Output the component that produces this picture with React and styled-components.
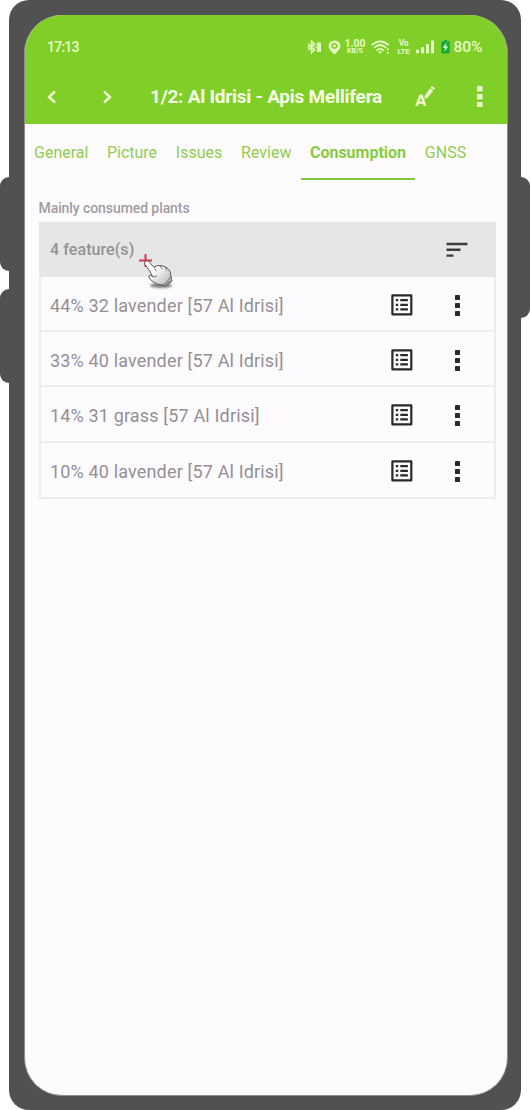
import React from "react";
import styled, { createGlobalStyle } from "styled-components";

const GlobalStyle = createGlobalStyle`
  *, *::before, *::after { box-sizing: border-box; }
  body { margin: 0; background: #fff; font-family: Roboto, "Liberation Sans", sans-serif; }
  svg { display: block; flex: none; }
`;

const Stage = styled.main`
  position: relative;
  width: 530px;
  height: 1110px;
  padding: 0 9px;
  overflow: hidden;
`;

const SideButton = styled.div`
  position: absolute;
  top: ${(p) => p.$top}px;
  ${(p) => p.$side}: 0;
  width: 20px;
  height: ${(p) => p.$height}px;
  border-radius: 9px;
  background: #515151;
`;

const Phone = styled.div`
  position: relative;
  height: 1110px;
  padding: 15px 13px 14px 15px;
  border-radius: 20px;
  background: #515151;
`;

const Screen = styled.div`
  height: 100%;
  border: solid #8c8c8c;
  border-width: 0 1px 1px;
  border-radius: 38px;
  overflow: hidden;
  background: #fefbff;
`;

const Header = styled.header`
  height: 109px;
  background: #80ce28;
  color: #f4ffe2;
`;

const StatusBar = styled.div`
  display: flex;
  align-items: center;
  height: 54px;
  padding: 10px 24.5px 0 22px;
`;

const Clock = styled.span`
  flex: 1;
  font-size: 14px;
  font-weight: 500;
  letter-spacing: -0.75px;
  color: #e9fbc8;
`;

const StatusIcons = styled.div`
  display: flex;
  align-items: center;
  color: #e6fac6;
`;

const Slot = styled.div`
  width: ${(p) => p.$w}px;
  display: flex;
  align-items: center;
`;

const Tiny = styled.div`
  display: flex;
  flex-direction: column;
  align-items: center;
  font-weight: 700;
  letter-spacing: ${(p) => p.$track || 0}px;
  font-size: ${(p) => p.$top}px;
  line-height: 9.5px;
  small {
    font-size: ${(p) => p.$bottom}px;
    line-height: 7.5px;
  }
`;

const Battery = styled.span`
  font-size: 15.5px;
  font-weight: 500;
`;

const TitleBar = styled.div`
  display: flex;
  align-items: center;
  height: 55px;
  padding: 0 24.5px 0 20px;
`;

const Title = styled.h1`
  flex: 1;
  margin: 0;
  font-size: 19px;
  font-weight: 700;
  letter-spacing: -0.25px;
  white-space: nowrap;
  color: #f6ffe6;
`;

const Tabs = styled.nav`
  display: flex;
  height: 56px;
`;

const Tab = styled.div`
  width: ${(p) => p.$w}px;
  height: 56px;
  display: flex;
  justify-content: center;
  padding-top: 19px;
  border-bottom: 2px solid ${(p) => (p.$active ? "#80c93a" : "transparent")};
  font-size: 16px;
  line-height: 20px;
  font-weight: ${(p) => (p.$active ? 700 : 400)};
  color: ${(p) => (p.$active ? "#87cb40" : "#8fcd4e")};
  white-space: nowrap;
`;

const Section = styled.section`
  padding: 19px 11px 0 13.5px;
`;

const Caption = styled.h2`
  margin: 0;
  height: 23px;
  font-size: 14px;
  line-height: 18px;
  font-weight: 500;
  letter-spacing: -0.08px;
  color: #a09da1;
`;

const Table = styled.div`
  border: 2px solid #efecf0;
  border-top: 0;
`;

const Row = styled.div`
  display: flex;
  align-items: center;
  height: ${(p) => (p.$last ? 54 : 55.2)}px;
  padding: 3px 34px 0 9.5px;
  border-bottom: ${(p) => (p.$last ? 0 : 2)}px solid #efecf0;
  color: #2b292c;
`;

const HeadRow = styled(Row)`
  height: 55px;
  margin: 0 -2px;
  padding: 0 28px 0 11.5px;
  border: 0;
  background: #e6e6e6;
`;

const RowText = styled.span`
  flex: 1;
  font-size: 18px;
  letter-spacing: 0.16px;
  color: #939094;
`;

const Count = styled.span`
  flex: 1;
  font-size: 16px;
  font-weight: 500;
  letter-spacing: 0.08px;
  color: #939393;
`;

const Pointer = styled.svg`
  position: absolute;
  left: 136px;
  top: 251px;
`;

const Chevron = ({ right }) => (
  <svg width="14" height="16" viewBox="0 0 14 16" fill="none" stroke="#efffcf" strokeWidth="2.4">
    <path d={right ? "M4 2.500 10 8 4 13.500" : "M10 2.500 4 8 10 13.500"} />
  </svg>
);

const Dots = ({ size = 5, gap = 8, color = "#2b292c" }) => (
  <svg width={size} height={gap * 2 + size} fill={color}>
    {[0, 1, 2].map((i) => (
      <rect key={i} width={size} height={size} y={i * gap} rx="0.4" />
    ))}
  </svg>
);

const ListIcon = () => (
  <svg width="22" height="22" viewBox="0 0 22 22" fill="#2b292c">
    <path fillRule="evenodd" d="M1.5.3h18.7q1.2 0 1.2 1.2v18.7q0 1.2-1.2 1.2H1.5Q.3 21.4.3 20.2V1.5Q.3.3 1.5.3ZM2.5 2.5v16.7h16.7V2.5Z" />
    <path d="M4.8 5h2.4v2.3H4.8zM9.3 5h7.6v2.3H9.3zM4.8 9.7h2.4V12H4.8zM9.3 9.7h7.6V12H9.3zM4.8 14.3h2.4v2.3H4.8zM9.3 14.3h7.6v2.3H9.3z" />
  </svg>
);

const SortIcon = () => (
  <svg width="22" height="16" viewBox="0 0 22 16" fill="#3c3c3c">
    <path d="M.5.8h21v2.400H.5zM.5 6.600h14V9H.5zM.5 12.400h7v2.400h-7z" />
  </svg>
);

const BluetoothIcon = () => (
  <svg width="15" height="14" viewBox="0 0 15 14">
    <path d="M1 4 7.500 9.700 4.500 12.700V1.300L7.500 4.300 1 10" fill="none" stroke="currentColor" strokeWidth="1.600" />
    <path d="M.5 7h1.500M7.600 7h1.200" stroke="currentColor" strokeWidth="1.500" />
    <rect x="9.800" y="2.600" width="4.200" height="9.400" rx=".6" fill="currentColor" />
  </svg>
);

const PinIcon = () => (
  <svg width="13" height="15" viewBox="0 0 12 15" preserveAspectRatio="none" fill="currentColor">
    <path fillRule="evenodd" d="M6 .4a5.500 5.500 0 0 1 5.500 5.500c0 3-3 5.600-5.500 8.700C3.500 11.500.5 8.900.5 5.900A5.500 5.500 0 0 1 6 .4Zm0 2.700a2.800 2.800 0 1 0 0 5.600 2.800 2.800 0 0 0 0-5.600Z" />
    <circle cx="6" cy="5.900" r="1.400" />
  </svg>
);

const WifiIcon = () => (
  <svg width="20" height="15" viewBox="0 0 20 15" fill="none" stroke="currentColor" strokeWidth="1.700">
    <path d="M.7 5.200Q9.200-2.600 17.700 5.200M3 8Q9.200 2 15.400 8M5.600 10.600Q9.200 7.200 12.800 10.600" />
    <path d="m7.200 11.800 2 2.200 2-2.200q-2-1.500-4 0Z" fill="currentColor" stroke="none" />
    <path d="M16.800 8.300v2M16.800 11.700v2" />
  </svg>
);

const SignalIcon = () => (
  <svg width="18" height="14" viewBox="0 0 18 14" fill="currentColor">
    <path d="M0 9.800h3v3.500H0zM5 7.200h3v6.100H5zM10 4h3v9.300h-3zM15 .5h3v12.800h-3z" />
  </svg>
);

const BatteryIcon = () => (
  <svg width="9" height="14" viewBox="0 0 9 14">
    <path d="M3 0h3v1.200h1.500q1.200 0 1.200 1.200v9.800q0 1.200-1.200 1.200h-6Q.3 13.400.3 12.200V2.400q0-1.200 1.200-1.200H3Z" fill="#1ca83b" />
    <path d="M5.600 2.800 1.700 7.800h2.400l-.7 3.800 3.900-5.200H4.900Z" fill="#dcffe0" />
  </svg>
);

const EditTextIcon = () => (
  <svg width="20" height="21" viewBox="0 0 20 21" fill="#f0ffd0">
    <path fillRule="evenodd" d="M4.500 8.500h3L11.500 20H8.800L8 17.700H3.700L2.800 20H.2Zm1.400 3.100L4.500 15.600h2.900Z" />
    <path d="M9.600 13.300 9.800 9.700 15 2.300 18.200 4.700 12.600 11.600ZM15.600 1.500 16.900 0 20 2.300 18.800 4Z" />
  </svg>
);

const rows = [
  "44% 32 lavender [57 Al Idrisi]",
  "33% 40 lavender [57 Al Idrisi]",
  "14% 31 grass [57 Al Idrisi]",
  "10% 40 lavender [57 Al Idrisi]",
];

export default function App() {
  return (
    <Stage>
      <GlobalStyle />
      <SideButton $side="left" $top={177} $height={93.5} />
      <SideButton $side="left" $top={289} $height={93.5} />
      <SideButton $side="right" $top={177} $height={140.5} />
      <Phone>
        <Screen>
          <Header>
            <StatusBar>
              <Clock>17:13</Clock>
              <StatusIcons>
                <Slot $w={21}><BluetoothIcon /></Slot>
                <Slot $w={16}><PinIcon /></Slot>
                <Slot $w={27}>
                  <Tiny $top={10.5} $bottom={7}>1.00<small>KB/S</small></Tiny>
                </Slot>
                <Slot $w={26}><WifiIcon /></Slot>
                <Slot $w={19}>
                  <Tiny $top={8.5} $bottom={8} $track={-0.3}>Vo<small>LTE</small></Tiny>
                </Slot>
                <Slot $w={25}><SignalIcon /></Slot>
                <Slot $w={12}><BatteryIcon /></Slot>
                <Battery>80%</Battery>
              </StatusIcons>
            </StatusBar>
            <TitleBar>
              <Slot $w={55}><Chevron /></Slot>
              <Slot $w={50}><Chevron right /></Slot>
              <Title>1/2: Al Idrisi - Apis Mellifera</Title>
              <Slot $w={62}><EditTextIcon /></Slot>
              <Dots size={5.5} gap={8} color="#f1ffd9" />
            </TitleBar>
          </Header>
          <Tabs>
            <Tab $w={72.5}>General</Tab>
            <Tab $w={69}>Picture</Tab>
            <Tab $w={65}>Issues</Tab>
            <Tab $w={69.5}>Review</Tab>
            <Tab $w={114} $active>Consumption</Tab>
            <Tab $w={61}>GNSS</Tab>
          </Tabs>
          <Section>
            <Caption>Mainly consumed plants</Caption>
            <Table>
              <HeadRow>
                <Count>4 feature(s)</Count>
                <SortIcon />
              </HeadRow>
              {rows.map((text, i) => (
                <Row key={i} $last={i === rows.length - 1}>
                  <RowText>{text}</RowText>
                  <Slot $w={64}><ListIcon /></Slot>
                  <Dots />
                </Row>
              ))}
            </Table>
          </Section>
        </Screen>
      </Phone>
      <Pointer width="42" height="42" viewBox="0 0 42 42">
        <defs>
          <linearGradient id="hand" x1="0" y1="0" x2="1" y2="1">
            <stop offset=".35" stopColor="#fff" />
            <stop offset="1" stopColor="#aaa" />
          </linearGradient>
          <filter id="soft" x="-30%" y="-100%" width="160%" height="300%">
            <feGaussianBlur stdDeviation="1.200" />
          </filter>
        </defs>
        <ellipse cx="25" cy="34.500" rx="11" ry="2.500" fill="#000" opacity=".5" filter="url(#soft)" />
        <path d="M9.500 3v13M3 9.500h13" stroke="#d8344c" strokeWidth="2" />
        <path d="M9.500 10.200Q11.500 8.700 13.500 11.500L18 16.300Q21 13.900 24 14.600Q28 14.400 31 17Q35 19.500 34.700 24.500L36 30 29.500 35.500 26 34Q20 33.800 16.500 30.200 11.500 26.500 13.300 24.700 14.500 24 16.700 25.600L13.800 20.200 9 13.500Q8 11.500 9.500 10.200Z" fill="url(#hand)" stroke="#555" strokeWidth="1" />
        <path d="m18 16.300 2.500 4M24 14.600l2.300 3.500M29 16l1.800 3.600M16.700 25.600q3.300 1 4.300-1.200M26.500 34q5.500-2.500 8.200-8.500M27.500 34.300l2.200-.4 4.600-4" fill="none" stroke="#666" strokeWidth=".9" />
      </Pointer>
    </Stage>
  );
}
